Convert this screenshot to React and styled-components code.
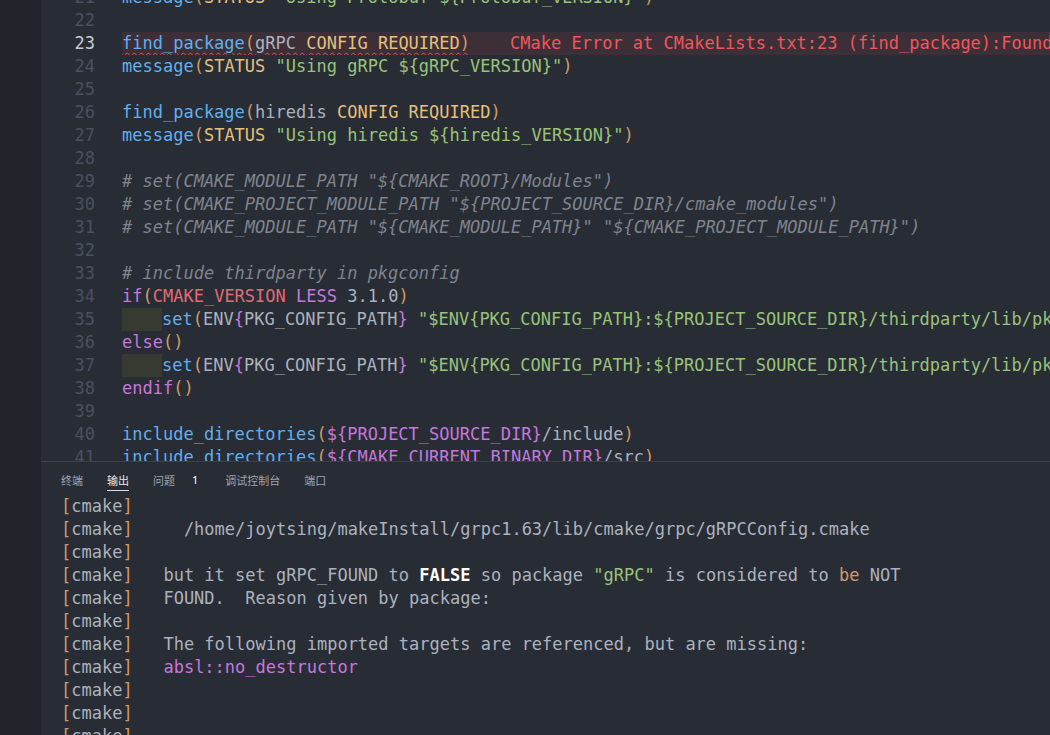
import React from 'react';
import styled, { createGlobalStyle } from 'styled-components';

const GlobalStyle = createGlobalStyle`
  html, body {
    margin: 0;
    padding: 0;
    background: #282c34;
    overflow: hidden;
  }
`;

const colors = {
  fn: '#61afef',
  paren: '#d19a66',
  kw: '#e5c07b',
  str: '#98c379',
  plain: '#abb2bf',
  cmt: '#7f848e',
  ctrl: '#c678dd',
  var: '#e06c75',
  bright: '#ffffff',
};

const PKG = '"$ENV{PKG_CONFIG_PATH}:${PROJECT_SOURCE_DIR}/thirdparty/lib/pkgconfig")';

const code = [
  { n: 21, t: [['fn', 'message'], ['paren', '('], ['kw', 'STATUS'], ['plain', ' '], ['str', '"Using Protobuf ${Protobuf_VERSION}"'], ['paren', ')']] },
  { n: 22, t: [] },
  { n: 23, error: true, t: [['fn', 'find_package'], ['paren', '('], ['plain', 'gRPC '], ['kw', 'CONFIG REQUIRED'], ['paren', ')']] },
  { n: 24, t: [['fn', 'message'], ['paren', '('], ['kw', 'STATUS'], ['plain', ' '], ['str', '"Using gRPC ${gRPC_VERSION}"'], ['paren', ')']] },
  { n: 25, t: [] },
  { n: 26, t: [['fn', 'find_package'], ['paren', '('], ['plain', 'hiredis '], ['kw', 'CONFIG REQUIRED'], ['paren', ')']] },
  { n: 27, t: [['fn', 'message'], ['paren', '('], ['kw', 'STATUS'], ['plain', ' '], ['str', '"Using hiredis ${hiredis_VERSION}"'], ['paren', ')']] },
  { n: 28, t: [] },
  { n: 29, t: [['cmt', '# set(CMAKE_MODULE_PATH "${CMAKE_ROOT}/Modules")']] },
  { n: 30, t: [['cmt', '# set(CMAKE_PROJECT_MODULE_PATH "${PROJECT_SOURCE_DIR}/cmake_modules")']] },
  { n: 31, t: [['cmt', '# set(CMAKE_MODULE_PATH "${CMAKE_MODULE_PATH}" "${CMAKE_PROJECT_MODULE_PATH}")']] },
  { n: 32, t: [] },
  { n: 33, t: [['cmt', '# include thirdparty in pkgconfig']] },
  { n: 34, t: [['ctrl', 'if'], ['paren', '('], ['var', 'CMAKE_VERSION'], ['plain', ' '], ['ctrl', 'LESS'], ['plain', ' 3.1.0'], ['paren', ')']] },
  { n: 35, indent: true, t: [['fn', 'set'], ['paren', '('], ['plain', 'ENV'], ['ctrl', '{'], ['plain', 'PKG_CONFIG_PATH'], ['ctrl', '}'], ['plain', ' '], ['str', PKG]] },
  { n: 36, t: [['ctrl', 'else'], ['paren', '()']] },
  { n: 37, indent: true, t: [['fn', 'set'], ['paren', '('], ['plain', 'ENV'], ['ctrl', '{'], ['plain', 'PKG_CONFIG_PATH'], ['ctrl', '}'], ['plain', ' '], ['str', PKG]] },
  { n: 38, t: [['ctrl', 'endif'], ['paren', '()']] },
  { n: 39, t: [] },
  { n: 40, t: [['fn', 'include_directories'], ['paren', '('], ['ctrl', '${PROJECT_SOURCE_DIR}'], ['plain', '/include'], ['paren', ')']] },
  { n: 41, t: [['fn', 'include_directories'], ['paren', '('], ['ctrl', '${CMAKE_CURRENT_BINARY_DIR}'], ['plain', '/src'], ['paren', ')']] },
];

const output = [
  [],
  [['plain', '    /home/joytsing/makeInstall/grpc1.63/lib/cmake/grpc/gRPCConfig.cmake']],
  [],
  [['plain', '  but it set gRPC_FOUND to '], ['bright', 'FALSE'], ['plain', ' so package '], ['str', '"gRPC"'], ['plain', ' is considered to '], ['paren', 'be'], ['plain', ' NOT']],
  [['plain', '  FOUND.  Reason given by package:']],
  [],
  [['plain', '  The following imported targets are referenced, but are missing:']],
  [['plain', '  '], ['ctrl', 'absl::no_destructor']],
  [],
  [],
  [],
];

const tabs = [
  { label: '终端' },
  { label: '输出', active: true },
  { label: '问题', badge: '1' },
  { label: '调试控制台' },
  { label: '端口' },
];

const App = () => {
  return (
    <Window>
      <GlobalStyle />
      <ActivityBar />
      <Main>
        <Editor>
          <Lines>
            {code.map((line) => (
              <Row key={line.n}>
                <LineNo $current={line.error}>{line.n}</LineNo>
                <Code $error={line.error}>
                  {line.indent && <Indent />}
                  <Source $error={line.error}>
                    {line.t.map(([k, txt], i) => (
                      <Tok key={i} $kind={k}>{txt}</Tok>
                    ))}
                  </Source>
                  {line.error && (
                    <ErrorLens>CMake Error at CMakeLists.txt:23 (find_package):Found package configuration file:</ErrorLens>
                  )}
                </Code>
              </Row>
            ))}
          </Lines>
        </Editor>
        <Panel>
          <TabBar>
            {tabs.map((tab) => (
              <Tab key={tab.label} $active={tab.active}>
                <TabLabel $active={tab.active}>{tab.label}</TabLabel>
                {tab.badge && <Badge>{tab.badge}</Badge>}
              </Tab>
            ))}
          </TabBar>
          <Output>
            {output.map((parts, idx) => (
              <OutLine key={idx}>
                <Tok $kind="paren">[</Tok>
                <Tok $kind="plain">cmake</Tok>
                <Tok $kind="paren">]</Tok>
                {parts.length > 0 && <Tok $kind="plain"> </Tok>}
                {parts.map(([k, txt], i) => (
                  <Tok key={i} $kind={k}>{txt}</Tok>
                ))}
              </OutLine>
            ))}
          </Output>
        </Panel>
      </Main>
    </Window>
  );
};

const mono = `"DejaVu Sans Mono", "Liberation Mono", monospace`;

const Window = styled.div`
  display: flex;
  width: 100vw;
  height: 100vh;
  background: #282c34;
  overflow: hidden;
`;

const ActivityBar = styled.div`
  width: 41px;
  flex-shrink: 0;
  background: #21252b;
`;

const Main = styled.div`
  flex: 1;
  display: flex;
  flex-direction: column;
  min-width: 0;
`;

const Editor = styled.div`
  height: 461px;
  flex-shrink: 0;
  overflow: hidden;
  background: #282c34;
`;

const Lines = styled.div`
  display: flex;
  flex-direction: column;
  margin-top: -14px;
  font-family: ${mono};
  font-size: 17px;
  line-height: 23px;
`;

const Row = styled.div`
  display: flex;
  height: 23px;
  white-space: pre;
`;

const LineNo = styled.div`
  width: 54px;
  margin-right: 27px;
  flex-shrink: 0;
  text-align: right;
  color: ${(p) => (p.$current ? '#c8ccd4' : '#495162')};
`;

const Code = styled.div`
  flex: 1;
  display: flex;
  background: ${(p) => (p.$error ? '#3c2f37' : 'transparent')};
  overflow: hidden;
`;

const Indent = styled.span`
  display: inline-block;
  width: 40px;
  height: 23px;
  background: #363a31;
  flex-shrink: 0;
`;

const Source = styled.span`
  text-decoration: ${(p) => (p.$error ? 'underline wavy #e05252' : 'none')};
  text-decoration-thickness: 1px;
  text-underline-offset: 3px;
`;

const Tok = styled.span`
  color: ${(p) => colors[p.$kind]};
  font-style: ${(p) => (p.$kind === 'cmt' ? 'italic' : 'normal')};
  font-weight: ${(p) => (p.$kind === 'bright' ? 'bold' : 'normal')};
`;

const ErrorLens = styled.span`
  margin-left: 40px;
  color: #f0575c;
`;

const Panel = styled.div`
  flex: 1;
  display: flex;
  flex-direction: column;
  border-top: 1px solid #3b4049;
  background: #282c34;
  overflow: hidden;
`;

const TabBar = styled.div`
  display: flex;
  gap: 24px;
  height: 31px;
  padding-left: 20px;
  flex-shrink: 0;
  font-family: "Noto Sans CJK SC", "Noto Sans", sans-serif;
  font-size: 11px;
`;

const Tab = styled.div`
  display: flex;
  align-items: flex-start;
  padding-top: 8px;
  color: ${(p) => (p.$active ? '#e6e6e6' : '#9da5b4')};
`;

const TabLabel = styled.span`
  line-height: 20px;
  border-bottom: 1px solid ${(p) => (p.$active ? '#d7dae0' : 'transparent')};
`;

const Badge = styled.span`
  margin-left: 14px;
  line-height: 20px;
  padding: 0 3px;
  color: #ffffff;
  font-family: "Noto Sans", sans-serif;
`;

const Output = styled.div`
  display: flex;
  flex-direction: column;
  padding: 2px 0 0 20px;
  font-family: ${mono};
  font-size: 17px;
  line-height: 23px;
`;

const OutLine = styled.div`
  height: 23px;
  white-space: pre;
`;

export default App;
